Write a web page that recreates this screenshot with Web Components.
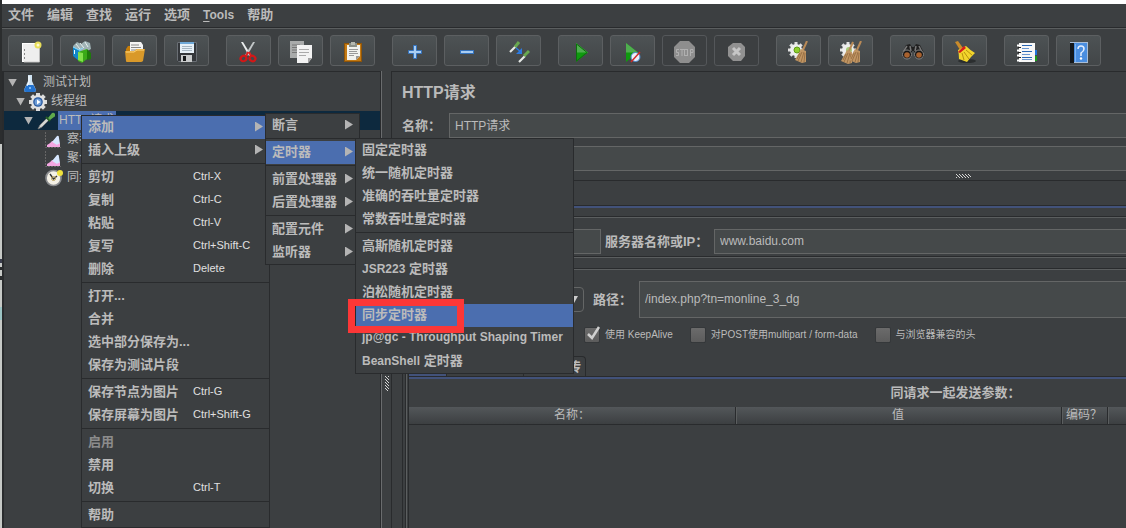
<!DOCTYPE html>
<html lang="zh-CN">
<head>
<meta charset="utf-8">
<title>JMeter</title>
<style>
html, body { margin: 0; height: 100%; }
body {
  overflow: hidden;
  /* sliver of the desktop behind the window's left edge */
  background: linear-gradient(#2b2d2e 144px, #c6c9c6 144px, #c6c9c6 259px, #3a3d4c 259px, #3a3d4c 263px, #c6c9c6 263px, #c6c9c6 267px, #2b2d2e 267px, #2b2d2e 270px, #c6c9c6 270px, #c6c9c6 276px, #2b2d2e 276px, #2b2d2e 280px, #c6c9c6 280px, #c6c9c6 307px, #9cc4c4 307px, #9cc4c4 320px, #c6c9c6 320px);
  --bg: #3c3f41;
  --dark: #292b2d;
  --light: #5b5e5f;
  --blue: #4b6eaf;
  --text: #bbbbbb;
  color: var(--text);
  font: 12px/16px "Liberation Sans", "Noto Sans CJK SC", sans-serif;
}
</style>
</head>
<body>
<jm-app></jm-app>
<script>
const define = (name, html, init) => {
  const template = document.createElement('template');
  template.innerHTML = html;
  customElements.define(name, class extends HTMLElement {
    constructor() {
      super();
      this.attachShadow({ mode: 'open' }).append(template.content.cloneNode(true));
    }
    connectedCallback() {
      if (init && !this.ready) { this.ready = true; init(this, this.shadowRoot); }
    }
  });
};

/* ---------- icons ---------- */
const gearTeeth = (cx, cy, r, w, fill) => [0, 45, 90, 135].map(a =>
  `<rect x="${cx - w / 2}" y="${cy - r}" width="${w}" height="${2 * r}" fill="${fill}" transform="rotate(${a} ${cx} ${cy})"/>`).join('');
const besom = (x, y) => `<g transform="translate(${x} ${y})">
  <path d="M12 0l-4 9" stroke="#b98a57" stroke-width="2"/>
  <path d="M6 8l5 2 0 11-4 1-7-3z" fill="#c19664"/>
  <path d="M7 11l-4 9M9 11l-3 10M10 12l-1 9M5 12l-3 6" stroke="#8a6238" stroke-width=".7"/></g>`;
const icons = {
  new: [23, `<rect x="3.500" y="2.500" width="17" height="18" fill="#eee" stroke="#fff"/><path d="M20.500 4v17H5" fill="none" stroke="#bbb"/>
    <path d="M5.500 8v2M5.500 12v2M5.500 16v2" stroke="#888"/><circle cx="19" cy="4" r="3.500" fill="#e8de5a"/><circle cx="19" cy="4" r="1.500" fill="#fffbd0"/>`],
  templates: [23, `<path d="M2 5l4-4 4 2 4-3 5 2 1 6-9 5-8-4z" fill="#9fb2b4"/><path d="M5 3l4 5M9 2l4 5M14 1l3 5" stroke="#e6eeee"/>
    <path d="M2 6l6 3v11l-6-5z" fill="#1287c9"/><path d="M8 9l3 1v11l-3-1z" fill="#5cc4f2"/><path d="M2 6l6 3 4-2" stroke="#8bdcff" fill="none"/>
    <path d="M7 11l9-3v10l-5 4-4-2z" fill="#3aa917"/><path d="M16 8l4 4v6l-4 1z" fill="#1f7a0b"/><path d="M7 11l5 1v9l-5-2z" fill="#83e04c"/><path d="M3.500 9v4" stroke="#e8f8ff"/>`],
  open: [23, `<path d="M3 8l2-3h5l2 2h8v13H3z" fill="#c57d09"/><path d="M7 1h11l2 3v9H7z" fill="#f4f4f4"/><path d="M8 4h8M8 6.500h10M8 9h10" stroke="#888"/>
    <path d="M2 10h9l3-2h8l-2 12q-1 1-2 1H4q-1 0-1-1z" fill="#d9992a"/><path d="M3 11h8l3-2h7" stroke="#ffd67a" fill="none"/>`],
  save: [23, `<path d="M2 1h19l1 1v19H3l-1-1z" fill="#34373b"/><path d="M2.500 1.500h19v19h-18l-1-1z" fill="none" stroke="#6a6f75"/><rect x="5" y="1" width="14" height="11" fill="#e7f1f8"/>
    <rect x="5" y="1" width="14" height="2" fill="#6fa9d8"/><path d="M7 5.500h10M7 7.500h10M7 9.500h10" stroke="#a6b6c2"/><rect x="6" y="14" width="11" height="7" fill="#c9cbcc"/><rect x="8" y="15" width="3" height="5" fill="#17191b"/>`],
  cut: [23, `<path d="M4 1l2 0 8 13-2 1z" fill="#e9ecec"/><path d="M18 1l-2 0-8 13 2 1z" fill="#c2c7c8"/><path d="M11 11l-2 4M12 11l2 4" stroke="#d22" stroke-width="2"/>
    <ellipse cx="6.500" cy="17.500" rx="3" ry="2.600" fill="none" stroke="#d31717" stroke-width="2.200" transform="rotate(-35 6.500 17.500)"/><ellipse cx="15.500" cy="17.500" rx="3" ry="2.600" fill="none" stroke="#d31717" stroke-width="2.200" transform="rotate(35 15.500 17.500)"/>`],
  copy: [23, `<path d="M1 0h14v17H1z" fill="#a9abab"/><path d="M3 4h8M3 6.500h8M3 9h5M3 11.500h5" stroke="#777"/><path d="M8 4h15v13l-4 5H8z" fill="#f3f3f3"/>
    <path d="M19 22v-5h4z" fill="#a4a4a4"/><path d="M10 8.500h10M10 11.500h10M10 14.500h7" stroke="#aaa"/>`],
  paste: [23, `<rect x="3" y="2" width="18" height="19" rx="1" fill="#c47a13"/><rect x="3.500" y="2.500" width="17" height="18" fill="none" stroke="#8d540a"/><path d="M6 4h13v11l-4 4H6z" fill="#f2f2ee"/>
    <path d="M15 19v-4h4z" fill="#999"/><path d="M8 2h8v4H8z" fill="#8a8f88"/><rect x="10" y="1" width="4" height="3" fill="#b5b8b0"/><path d="M8 8.500h9M8 10.500h8M8 12.500h9M8 14.500h5" stroke="#999"/>`],
  plus: [23, `<path d="M10.500 4.500h3v5h5v3h-5v5h-3v-5h-5v-3h5z" fill="#a9cdf2" stroke="#3573bd"/>`],
  minus: [23, `<rect x="5.500" y="9.500" width="13" height="3" fill="#a9cdf2" stroke="#3573bd"/>`],
  toggle: [23, `<path d="M3 11L9 5" stroke="#e6e9e6" stroke-width="2.200"/><path d="M8 6l4-5" stroke="#69a850" stroke-width="3"/><path d="M12 21l6-6" stroke="#e6e9e6" stroke-width="2.200"/><path d="M17 15l5-5" stroke="#69a850" stroke-width="3"/>
    <path d="M9 7l5 4" stroke="#2c7ae0" stroke-width="1.500"/><path d="M15 7v6H9z" fill="#2c7ae0"/>`],
  play: [23, `<path d="M7 2l12 9.500L7 21z" fill="#0f9a0f"/><path d="M7 2l12 9.500H7z" fill="#4fae4f"/><path d="M7.500 3v17l10.500-8.500z" fill="none" stroke="#0b700b"/>`],
  playnp: [23, `<path d="M5 2l12 9.500L5 21z" fill="#0f9a0f"/><path d="M5 2l12 9.500H5z" fill="#4fae4f"/><circle cx="14.500" cy="16" r="4.500" fill="#e9f1fb" stroke="#4a86c9"/><path d="M10 21l9-10" stroke="#d22b2b" stroke-width="1.500"/>`],
  stop: [23, `<path d="M7 0h9l6 6v10l-6 6H7l-6-6V6z" fill="#8e8e8e"/><g fill="none" stroke="#b0b0b0"><path d="M6 8.500H3.500v3H5.500v3H3M7 8.500h4M9 8.500v6.500"/><rect x="11.500" y="8.500" width="3" height="6"/><path d="M17.500 15V8.500h2.500v3h-2"/></g>`],
  shutdown: [23, `<path d="M8 2h8l4 4v9l-4 5H8l-5-5V6z" fill="#919191"/><path d="M8 7l7 7M15 7l-7 7" stroke="#c6c6c6" stroke-width="3"/>`],
  clear: [23, gearTeeth(9, 9, 8, 3, '#e2e2e2') + `<circle cx="9" cy="9" r="6" fill="#eee"/><circle cx="10" cy="9" r="3" fill="#8fce2c" stroke="#5f9b17"/>` + besom(8, 0)],
  clearall: [23, gearTeeth(9, 9, 8, 3, '#e2e2e2') + `<circle cx="9" cy="9" r="6" fill="#eee"/><circle cx="10" cy="9" r="3" fill="#a6c877"/>` + besom(2, 1) + besom(10, 0)],
  search: [23, `<g transform="translate(0 -1)"><path d="M5 5l4-1 2 3h2l2-3 4 1 4 8v4H13v-6h-2v6H1v-4z" fill="#202020"/><path d="M6 6l-4 6M9 6l1 5M18 6l3 6M15 6l-1 5" stroke="#777" stroke-width="1.500"/>
    <circle cx="6" cy="14.500" r="4.500" fill="#151515" stroke="#888"/><circle cx="18" cy="14.500" r="4.500" fill="#151515" stroke="#888"/><circle cx="6" cy="15" r="2.800" fill="#a9622f"/><circle cx="18" cy="15" r="2.800" fill="#a9622f"/></g>`],
  broom: [23, `<ellipse cx="14" cy="20" rx="9" ry="2" fill="#2b2e2f"/><path d="M2 1l3-1 5 7-3 2z" fill="#c98b2b"/><path d="M9 8l4-2q4 4 9 7l-4 4-4 5-8-3q0-5-1-9z" transform="translate(0 -1)" fill="#f2d52c"/>
    <path d="M9 12l2 7M11 11l5 7M13 9l6 5" stroke="#b8930e"/><path d="M5 11l6-6 2 2-6 5z" fill="#d71c1c"/>`],
  log: [23, `<path d="M19 9h3v5h-3z" fill="#2374d9"/><path d="M19 15h3v5h-3z" fill="#1a9d1a"/><rect x="4" y="2" width="16" height="19" fill="#f7f7f7"/>
    <path d="M7 4.500h10M7 10.500h10M7 16.500h10" stroke="#2a67b5"/><path d="M7 7.500h7M7 13.500h8M7 18.500h10" stroke="#6a96cf"/><path d="M2 4.500h4M2 9.500h4M2 14.500h4M2 19.500h4" stroke="#fff" stroke-width="2"/><path d="M3 6.500h3M3 11.500h3M3 16.500h3" stroke="#222"/>`],
  help: [23, `<rect x="3" y="1" width="18" height="21" fill="#a9bdd6"/><rect x="3" y="2" width="4" height="20" fill="#15181b"/><rect x="7" y="2" width="13" height="19" fill="#4a8ee0"/><path d="M8.500 3v18" stroke="#7db3f0"/>
    <path d="M11 8q0-3 3-3t3 3q0 2-3 4v3" fill="none" stroke="#e4efff" stroke-width="1.500"/><circle cx="14" cy="17.500" r="1.200" fill="#fff"/>`],
  flask: [18, `<path d="M7 1h4v6l4 9q0 2-2 2H5q-2 0-2-2l4-9z" fill="#cfe3f3"/><path d="M5.500 11h7l2.500 5q0 2-2 2H5q-2 0-2-2z" fill="#2272cf"/><path d="M8 2v6l-2 4" stroke="#fff" fill="none"/><circle cx="9" cy="14" r="1" fill="#9bd0ff"/>`],
  gear: [18, gearTeeth(9, 9, 9, 4, '#dcdcdc') + `<circle cx="9" cy="9" r="7" fill="#e2e2e2"/><circle cx="9" cy="9" r="4.800" fill="#27579d"/><circle cx="9" cy="9" r="3.500" fill="#6d9cd6"/><path d="M8 6.500l3.500 2.500L8 11.500z" fill="#fff"/>`],
  dropper: [18, `<path d="M1 17l2-4 7-7 2 2-7 7z" fill="#d5d8d5" stroke="#777" stroke-width=".8"/><path d="M9 5l4 4" stroke="#255d25" stroke-width="2"/><path d="M11 6l4-5q2-1 3 1t-1 3l-4 3z" fill="#5faa4b"/>`],
  chart: [18, `<path d="M.5 1v15.500H16" fill="none" stroke="#666" stroke-dasharray="2 1"/><path d="M2 16l5-6 8 2v4z" fill="#f4b4e6"/><path d="M7 11l5-6q2-1 2 2l1 6-4 1z" fill="#d6e6ff"/><path d="M2 16v-2l5-3 5 3 3-2v4z" fill="#f3a6e2"/>`],
  clock: [18, `<circle cx="8.500" cy="9" r="7.500" fill="#f4f1e6" stroke="#8b8d90" stroke-width="1.700"/><path d="M5 5l3.500 5L12 7" fill="none" stroke="#333" stroke-width="1.400"/><circle cx="8.500" cy="9.500" r="2" fill="none" stroke="#b9a15a"/><circle cx="15" cy="4" r="3" fill="#f0e23c"/>`],
  gripH: [15, `<defs><pattern id="p" width="3" height="4" patternUnits="userSpaceOnUse"><path d="M0 0h1v1H0zM1 1h1v1H1zM2 2h1v1H2zM0 3h1v1H0z" fill="#d5d5d5"/></pattern></defs><rect width="15" height="4" fill="url(#p)"/>`, 4],
  gripV: [4, `<defs><pattern id="p" width="4" height="3" patternUnits="userSpaceOnUse"><path d="M0 0h1v1H0zM1 1h1v1H1zM2 2h1v1H2zM3 0h1v1H3z" fill="#d5d5d5"/></pattern></defs><rect width="4" height="15" fill="url(#p)"/>`, 15],
};
define('jm-icon', `<style>:host{display:block;flex:none;line-height:0}svg{display:block;fill:none}</style><div></div>`, (el, root) => {
  const [w, body, h = w] = icons[el.getAttribute('name')];
  root.querySelector('div').innerHTML = `<svg width="${w}" height="${h}" viewBox="0 0 ${w} ${h}" aria-hidden="true">${body}</svg>`;
});

/* ---------- menu bar and tool bar ---------- */
define('jm-menubar', `<style>
  :host{display:flex;gap:13px;padding:0 6px 1px;height:22px;align-items:center;border-bottom:1px solid var(--dark)}
  button{all:unset;font-weight:700;font-size:13px;line-height:20px}
  .latin{font-size:12px}
  u{text-underline-offset:2px}
</style>
<button>文件</button><button>编辑</button><button>查找</button><button>运行</button><button>选项</button><button class="latin"><u>T</u>ools</button><button>帮助</button>`);

define('jm-tool', `<style>
  :host{display:block}
  button{box-sizing:border-box;width:45px;height:31px;padding:3px 0 0 10px;margin:0;display:block;border:1px solid #5c5f61;border-radius:3px;background:linear-gradient(#4d5254,#424648)}
  button:disabled{background:none;border-color:#54575a}
</style><button></button>`, (el, root) => {
  const b = root.querySelector('button');
  b.disabled = el.hasAttribute('off');
  b.setAttribute('aria-label', el.getAttribute('name'));
  b.innerHTML = `<jm-icon name="${el.getAttribute('name')}"></jm-icon>`;
});

define('jm-toolbar', `<style>
  :host{display:flex;gap:17px;padding:6px 6px 5px;border-top:1px solid var(--light)}
  div{display:flex;gap:7px}
</style>
<div><jm-tool name="new"></jm-tool><jm-tool name="templates"></jm-tool><jm-tool name="open"></jm-tool><jm-tool name="save"></jm-tool></div>
<div><jm-tool name="cut"></jm-tool><jm-tool name="copy"></jm-tool><jm-tool name="paste"></jm-tool></div>
<div><jm-tool name="plus"></jm-tool><jm-tool name="minus"></jm-tool><jm-tool name="toggle"></jm-tool></div>
<div><jm-tool name="play"></jm-tool><jm-tool name="playnp"></jm-tool><jm-tool name="stop" off></jm-tool><jm-tool name="shutdown" off></jm-tool></div>
<div><jm-tool name="clear"></jm-tool><jm-tool name="clearall"></jm-tool></div>
<div><jm-tool name="search"></jm-tool><jm-tool name="broom"></jm-tool></div>
<div><jm-tool name="log"></jm-tool><jm-tool name="help"></jm-tool></div>`);

/* ---------- test plan tree ---------- */
define('jm-node', `<style>
  :host{display:flex;align-items:center;height:19px;padding-left:calc(var(--level) * 8px + 4px)}
  :host([selected]){background:#0d293e}
  :host([selected]) span{background:var(--blue)}
  i{flex:none;width:9px;height:8px;margin-right:4px;background:#b4b4b4;clip-path:polygon(0 0,100% 0,50% 100%)}
  :host([leaf]) i{visibility:hidden}
  span{line-height:19px;margin-left:3px;padding:0 2px 0 1px;white-space:nowrap}
</style><i></i><div></div><span><slot></slot></span>`, (el, root) => {
  root.querySelector('div').innerHTML = `<jm-icon name="${el.getAttribute('icon')}"></jm-icon>`;
  el.style.setProperty('--level', el.getAttribute('level'));
});
define('jm-tree', `<style>
  :host{display:block;box-sizing:border-box;border:solid var(--dark);border-width:1px 1px 0 2px;padding-top:1px;box-shadow:1px 0 #6a6c6e}
</style>
<jm-node level="0" icon="flask">测试计划</jm-node>
<jm-node level="1" icon="gear">线程组</jm-node>
<jm-node level="2" icon="dropper" selected>HTTP请求</jm-node>
<jm-node level="3" icon="chart" leaf>察看结果树</jm-node>
<jm-node level="3" icon="chart" leaf>聚合报告</jm-node>
<jm-node level="3" icon="clock" leaf>同步定时器</jm-node>`);

/* ---------- form parts ---------- */
define('jm-field', `<style>
  :host{display:flex;align-items:center;min-width:0}
  label{font-weight:700;font-size:13px;white-space:nowrap;flex:none;width:var(--label)}
  input{box-sizing:border-box;flex:1;min-width:0;height:var(--h,25px);margin:0;padding:0 5px 2px;border:1px solid #646666;border-right-width:var(--end,0px);border-radius:0;background:#45494a;color:var(--text);font:inherit;outline:0}
</style><label for="f"><slot></slot></label><input id="f">`, (el, root) => {
  const input = root.querySelector('input');
  input.value = el.getAttribute('value') || '';
  if (el.hasAttribute('name')) input.setAttribute('aria-label', el.getAttribute('name'));
});
define('jm-check', `<style>
  :host{display:block}
  label{display:flex;align-items:center;gap:6px;font-size:10px;line-height:16px;white-space:nowrap}
  input{display:block;appearance:none;margin:0;width:14px;height:14px;border-radius:1px;background:linear-gradient(#6b6b6b,#5c5c5c);box-shadow:0 0 0 1px #35383a,0 1px #27292a}
  span{position:relative;display:block}
  svg{position:absolute;left:0;top:-3px;fill:none}
  input:not(:checked) + svg{display:none}
</style><label><span><input type="checkbox"><svg width="16" height="16"><path d="M3 9l4 4 7-11" stroke="#d0d0d0" stroke-width="2.500"/></svg></span><slot></slot></label>`, (el, root) => {
  root.querySelector('input').checked = el.hasAttribute('checked');
});
define('jm-section', `<style>
  :host{display:block;border-top:1px solid var(--dark);box-shadow:inset 0 1px var(--light)}
</style><slot></slot>`);

define('jm-params', `<style>
  :host{display:flex;flex-direction:column;flex:1}
  table{width:100%;table-layout:fixed;border-collapse:separate;border-spacing:0}
  caption{font-weight:700;font-size:13px;line-height:28px;padding-left:376px}
  th{font-weight:400;font-size:12px;line-height:17px;height:17px;padding:0;white-space:nowrap;background:linear-gradient(#53575a,#3c3f41);border-bottom:1px solid var(--dark)}
  th + th{box-shadow:inset 1px 0 var(--dark),inset 2px 0 var(--light)}
  th.code{width:46px} th.rest{width:19px}
</style>
<table><caption>同请求一起发送参数：</caption><thead><tr><th>名称：</th><th>值</th><th class="code">编码？</th><th class="rest"></th></tr></thead></table>`);

define('jm-request', `<style>
  :host{display:flex;flex-direction:column;border-left:1px solid var(--dark);border-top:1px solid var(--dark);overflow:hidden}
  header{padding:9px 0 0 10px;display:grid;gap:8px;--label:47px}
  h1{margin:0;font-size:16px;line-height:24px;font-weight:700}
  .grip{height:9px;display:flex;justify-content:center;align-items:center;padding-left:409px}
  .lower{margin-left:10px;border:solid var(--dark);border-width:1px 0 0 1px;padding-left:2px;flex:1;display:flex;flex-direction:column}
  .inner{flex:1;display:flex;flex-direction:column;border-left:1px solid var(--dark);box-shadow:inset 1px 0 var(--light);padding-left:3px}
  .body{box-shadow:-1px 0 var(--dark)}
  .tabs{height:24px}
  .line{height:2px;background:#42527a;border-top:1px solid var(--dark)}
  .body{margin-top:8px;flex:1;display:flex;flex-direction:column}
  .server{display:flex;gap:4px;padding:12px 0 2px}
  .server jm-field:first-child{width:192px;--end:1px;--label:0px}
  .server jm-field + jm-field{flex:1;--label:109px}
  .title{height:11px}
  .path{display:flex;gap:9px;align-items:center;padding-top:12px}
  .path jm-field{flex:1;--label:46px;--h:37px}
  select{appearance:none;box-sizing:border-box;width:175px;height:25px;border:1px solid #646666;border-radius:4px;background:none;color:inherit;font:inherit;padding:0 8px}
  .select{position:relative}
  .select i{position:absolute;right:6px;top:9px;width:9px;height:8px;background:#ccc;clip-path:polygon(0 0,100% 0,50% 100%)}
  .checks{display:flex;gap:18px;padding:9px 0 0 176px}
  nav{display:flex;margin-top:13px;height:20px}
  nav button{all:unset;box-sizing:border-box;border:1px solid var(--dark);border-width:1px 1px 0 0;border-radius:0 4px 0 0;font-weight:700;font-size:13px;text-align:right;padding-right:4px}
  nav button:nth-child(1){width:38px;background:linear-gradient(transparent 17px,#42527a 17px)}
  nav button:nth-child(2){width:77px}
  nav button:nth-child(3){width:62px}
</style>
<header><h1>HTTP请求</h1><jm-field value="HTTP请求">名称：</jm-field><jm-field name="注释"></jm-field></header>
<div class="grip"><jm-icon name="gripH"></jm-icon></div>
<div class="lower"><div class="inner">
  <div class="tabs"></div><div class="line"></div>
  <div class="body">
    <jm-section><div class="server"><jm-field name="协议"></jm-field><jm-field value="www.baidu.com">服务器名称或IP：</jm-field></div></jm-section>
    <jm-section><div class="title"></div></jm-section>
    <jm-section>
      <div class="path"><div class="select"><select aria-label="方法"><option>GET</option></select><i></i></div><jm-field value="/index.php?tn=monline_3_dg">路径：</jm-field></div>
      <div class="checks"><jm-check checked>使用 KeepAlive</jm-check><jm-check>对POST使用multipart / form-data</jm-check><jm-check>与浏览器兼容的头</jm-check></div>
    </jm-section>
    <nav><button aria-label="参数"></button><button aria-label="消息体数据"></button><button>传</button></nav>
    <div class="line"></div>
    <jm-params></jm-params>
  </div>
</div></div>`);

/* ---------- popup menus ---------- */
define('jm-menu', `<style>
  :host{display:block;box-sizing:border-box;background:var(--bg);border:1px solid var(--dark)}
</style><div role="menu"><slot></slot></div>`);
define('jm-sep', `<style>
  :host{display:block;height:4px;background:linear-gradient(transparent 1px,var(--dark) 1px,var(--dark) 2px,transparent 2px)}
</style>`);
define('jm-item', `<style>
  :host{display:block}
  button{all:unset;box-sizing:border-box;width:100%;height:23px;padding:0 6px 2px;display:flex;align-items:center;font-weight:700;font-size:13px;line-height:21px;white-space:nowrap}
  :host([latin]) button,::slotted(small){font-size:12px}
  :host([active]) button{background:var(--blue)}
  button:disabled{color:#8c8c8c}
  .label{flex:none;min-width:105px}
  kbd{font:11px/21px "Liberation Sans",sans-serif;color:#e0e0e0}
  i{margin-left:auto;width:8px;height:10px;background:#b4b4b4;clip-path:polygon(0 0,100% 50%,0 100%);display:none}
  :host([sub]) i{display:block}
  :host([sub]) .label{min-width:0}
</style><button role="menuitem"><span class="label"><slot></slot></span><kbd></kbd><i></i></button>`, (el, root) => {
  const kbd = root.querySelector('kbd'), key = el.getAttribute('key');
  if (key) kbd.textContent = key; else kbd.remove();
  root.querySelector('button').disabled = el.hasAttribute('off');
});

/* ---------- application ---------- */
define('jm-app', `<style>
  :host{display:flex;flex-direction:column;position:relative;box-sizing:border-box;min-height:100vh;margin-left:2px;border-top:4px solid #fff;background:var(--bg)}
  main{flex:1;display:flex}
  jm-tree{flex:0 0 379px}
  .divider{flex:0 0 10px;display:flex;justify-content:center;padding:305px 0 0 2px;box-sizing:border-box}
  jm-request{flex:1;min-width:0}
  jm-menu,.mark{position:absolute}
  .context{left:79px;top:111px;width:189px}
  .add{left:263px;top:109px;width:95px}
  .timer{left:353px;top:134px;width:219px}
  .mark{left:346px;top:295px;width:116px;height:34px;box-sizing:border-box;border:7px solid #fc3737}
</style>
<jm-menubar></jm-menubar><jm-toolbar></jm-toolbar>
<main><jm-tree></jm-tree><div class="divider"><jm-icon name="gripV"></jm-icon></div><jm-request></jm-request></main>
<jm-menu class="context">
  <jm-item active sub>添加</jm-item><jm-item sub>插入上级</jm-item><jm-sep></jm-sep>
  <jm-item key="Ctrl-X">剪切</jm-item><jm-item key="Ctrl-C">复制</jm-item><jm-item key="Ctrl-V">粘贴</jm-item><jm-item key="Ctrl+Shift-C">复写</jm-item><jm-item key="Delete">删除</jm-item><jm-sep></jm-sep>
  <jm-item>打开...</jm-item><jm-item>合并</jm-item><jm-item>选中部分保存为...</jm-item><jm-item>保存为测试片段</jm-item><jm-sep></jm-sep>
  <jm-item key="Ctrl-G">保存节点为图片</jm-item><jm-item key="Ctrl+Shift-G">保存屏幕为图片</jm-item><jm-sep></jm-sep>
  <jm-item off>启用</jm-item><jm-item>禁用</jm-item><jm-item key="Ctrl-T">切换</jm-item><jm-sep></jm-sep>
  <jm-item>帮助</jm-item>
</jm-menu>
<jm-menu class="add">
  <jm-item sub>断言</jm-item><jm-sep></jm-sep>
  <jm-item sub active>定时器</jm-item><jm-sep></jm-sep>
  <jm-item sub>前置处理器</jm-item><jm-item sub>后置处理器</jm-item><jm-sep></jm-sep>
  <jm-item sub>配置元件</jm-item><jm-item sub>监听器</jm-item>
</jm-menu>
<jm-menu class="timer">
  <jm-item>固定定时器</jm-item><jm-item>统一随机定时器</jm-item><jm-item>准确的吞吐量定时器</jm-item><jm-item>常数吞吐量定时器</jm-item><jm-sep></jm-sep>
  <jm-item>高斯随机定时器</jm-item><jm-item><small>JSR223</small> 定时器</jm-item><jm-item>泊松随机定时器</jm-item><jm-item active>同步定时器</jm-item><jm-item latin>jp@gc - Throughput Shaping Timer</jm-item><jm-item><small>BeanShell</small> 定时器</jm-item>
</jm-menu>
<div class="mark"></div>`);
</script>
</body>
</html>
